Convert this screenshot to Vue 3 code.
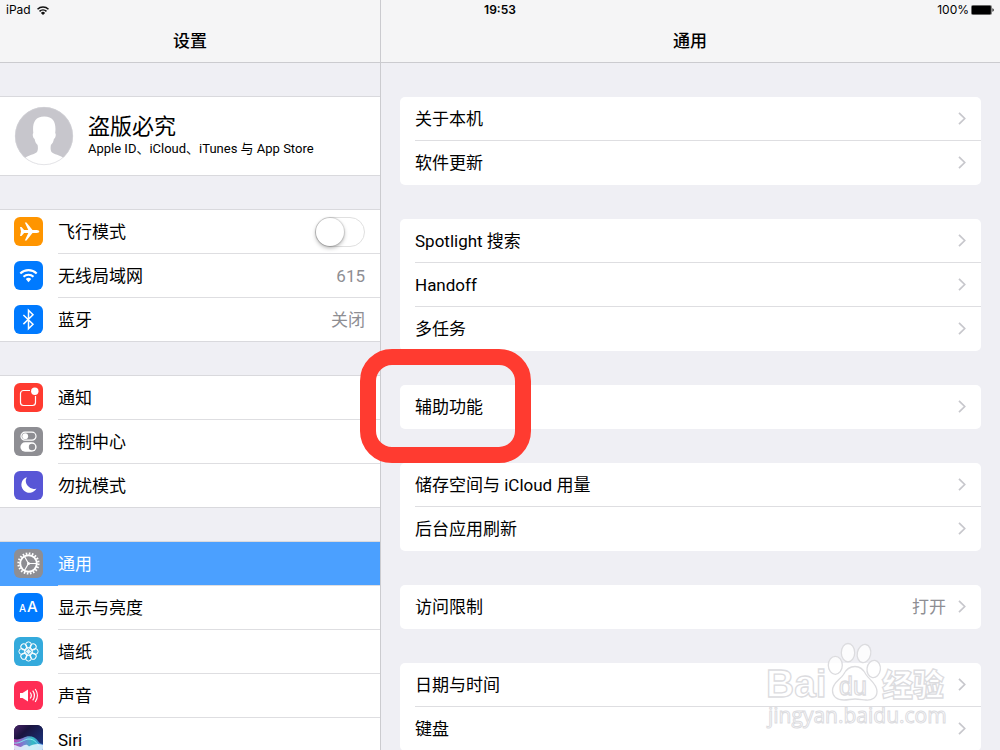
<template>
  <div class="screen">
    <header class="top">
      <div class="status">
        <span class="carrier">
          iPad
          <svg class="wifi" viewBox="0 0 12 9" aria-hidden="true">
            <path d="M.5 3.3a7.800 7.800 0 0 1 11 0M2.500 5.400a5 5 0 0 1 7 0" fill="none" stroke="#111" stroke-width="1.500" />
            <path d="M6 9 3.900 6.900a3 3 0 0 1 4.200 0z" fill="#111" />
          </svg>
        </span>
        <span class="clock">19:53</span>
        <span class="battery">
          100%
          <svg viewBox="0 0 23 10" aria-hidden="true">
            <rect x="0" y="0" width="21" height="10" rx="1.800" fill="#888" />
            <rect x=".8" y=".8" width="19" height="8.400" rx="1" fill="#000" />
            <path d="M21.500 3.200c1.600.4 1.600 3.200 0 3.600z" fill="#000" />
          </svg>
        </span>
      </div>
      <div class="titles">
        <h1>设置</h1>
        <h2>通用</h2>
      </div>
    </header>

    <div class="panes">
      <nav class="sidebar">
        <div class="block">
          <a class="profile" href="#account">
            <svg class="avatar" viewBox="0 0 60 60" aria-hidden="true">
              <circle cx="30" cy="30" r="29" fill="#c7c6cc" />
              <path d="M11 52c3-3 10-3.500 12-6 1.200-2 1-5 .6-7-1.600-1.500-2.600-3.500-3-6-1.800-1-2.400-5-1.300-6-1-9 1-16.500 11-16.500S42.300 18 41.200 27c1.100 1 .5 5-1.300 6-.4 2.500-1.400 4.500-3 6-.4 2-.6 5 .6 7 2 2.500 9 3 12 6a29 29 0 0 1-38.500 0z" fill="#fff" />
              <circle cx="30" cy="30" r="28.700" fill="none" stroke="#d2d1d6" stroke-width=".6" />
            </svg>
            <span class="who">
              <strong>盗版必究</strong>
              <small>Apple ID、iCloud、iTunes 与 App Store</small>
            </span>
          </a>
        </div>

        <div v-for="(block, b) in sidebar" :key="b" class="block">
          <component
            :is="item.toggle ? 'label' : 'a'"
            v-for="item in block"
            :key="item.id"
            class="item"
            :class="{ active: item.id === current }"
            :href="item.toggle ? undefined : '#' + item.id"
            @click="select(item)"
          >
            <svg class="icon" viewBox="0 0 29 29" aria-hidden="true">
              <rect width="29" height="29" rx="6" :fill="item.color" />

              <path
                v-if="item.id === 'airplane'"
                d="M6 10h1.500l2.600 3h4.200L10.800 5.500h1.700l6 7.500h4.300c1.600 0 2.500.8 2.500 1.500s-.9 1.500-2.500 1.500h-4.300l-6 7.500h-1.700l3.500-7.500h-4.200l-2.600 3H6l1-4.500z"
                fill="#fff"
              />

              <template v-else-if="item.id === 'wifi'">
                <path d="M6.300 12.400a12 12 0 0 1 16.400 0M9.500 15.700a7.400 7.400 0 0 1 10 0" fill="none" stroke="#fff" stroke-width="2.100" />
                <path d="m14.500 21.300-2.700-3.200a4 4 0 0 1 5.400 0z" fill="#fff" />
              </template>

              <path
                v-else-if="item.id === 'bluetooth'"
                d="m9.400 10 9.600 9.300-4.500 4.500V5.300L19 9.800l-9.600 9.300"
                fill="none"
                stroke="#fff"
                stroke-width="1.500"
              />

              <template v-else-if="item.id === 'notifications'">
                <path d="M16 7.500H9.500a3 3 0 0 0-3 3v9a3 3 0 0 0 3 3h9a3 3 0 0 0 3-3V13" fill="none" stroke="#fff" stroke-width="1.200" />
                <circle cx="20.800" cy="8.200" r="3.700" fill="#fff" />
              </template>

              <template v-else-if="item.id === 'control'">
                <rect x="7" y="5.200" width="15" height="8" rx="4" fill="none" stroke="#fff" stroke-width="1.200" />
                <circle cx="11.200" cy="9.200" r="2.900" fill="#fff" />
                <rect x="6.400" y="15.300" width="16.200" height="9.400" rx="4.700" fill="#fff" />
                <circle cx="18" cy="20" r="3.200" fill="#8e8e93" />
              </template>

              <path
                v-else-if="item.id === 'dnd'"
                d="M12.800 6.200a8 8 0 1 0 9.700 11.200A8 8 0 0 1 12.800 6.200z"
                fill="#fff"
              />

              <template v-else-if="item.id === 'general'">
                <circle cx="14.500" cy="14.500" r="10" fill="none" stroke="#fff" stroke-width="2.200" stroke-dasharray="1.600 1.542" />
                <circle cx="14.500" cy="14.500" r="8.300" fill="none" stroke="#fff" stroke-width="1.900" />
                <path d="M14.500 14.500h8M14.500 14.500l-4-7M14.500 14.500l-4 7" stroke="#fff" stroke-width="1.200" />
                <circle cx="14.500" cy="14.500" r="1.500" fill="#fff" />
              </template>

              <g v-else-if="item.id === 'display'" class="letters" fill="#fff">
                <text x="5" y="19" font-size="10">A</text>
                <text x="13" y="19" font-size="15">A</text>
              </g>

              <g v-else-if="item.id === 'wallpaper'" fill="none" stroke="#fff" stroke-width="1">
                <circle
                  v-for="n in 8"
                  :key="n"
                  cx="14.500"
                  cy="7.800"
                  r="2.900"
                  :transform="`rotate(${n * 45} 14.5 14.5)`"
                />
                <circle
                  v-for="n in 8"
                  :key="'i' + n"
                  cx="14.500"
                  cy="12.300"
                  r="1.700"
                  stroke-width=".6"
                  :transform="`rotate(${n * 45} 14.5 14.5)`"
                />
              </g>

              <template v-else-if="item.id === 'sound'">
                <path d="M6 12h2.500L14 8.500v12L8.500 17H6z" fill="#fff" />
                <path d="M16.200 11.500a5 5 0 0 1 0 6M18.700 9.700a8 8 0 0 1 0 9.600M21.200 8a11 11 0 0 1 0 13" fill="none" stroke="#fff" stroke-width="1.200" />
              </template>

              <template v-else-if="item.id === 'siri'">
                <defs>
                  <linearGradient id="siriSky" x1="0" y1="0" x2="1" y2="1">
                    <stop offset="0" stop-color="#4a2468" />
                    <stop offset=".3" stop-color="#1a1440" />
                    <stop offset="1" stop-color="#1b3f90" />
                  </linearGradient>
                  <linearGradient id="siriWave" x1="0" y1="0" x2="1" y2="0">
                    <stop offset="0" stop-color="#e04fd0" />
                    <stop offset=".35" stop-color="#8a9cf2" />
                    <stop offset=".65" stop-color="#3ce0dc" />
                    <stop offset="1" stop-color="#4a86f0" />
                  </linearGradient>
                </defs>
                <rect width="29" height="29" rx="6" fill="url(#siriSky)" />
                <path d="M0 14c4 1 6 0 9-1 5-3 12-2 15 3 1 2 3 3 5 3v4a6 6 0 0 1-6 6H6a6 6 0 0 1-6-6z" fill="url(#siriWave)" opacity=".8" />
                <path d="M0 18c6 1 10-4 15-4s8 4 10 7" fill="none" stroke="#7ff0f4" stroke-width=".9" />
                <path d="M0 20c3 0 5 3 8 1.500 2-1.500 5-3 7 0 3-2 9-3.500 14-1.500v3a6 6 0 0 1-6 6H6a6 6 0 0 1-6-6z" fill="#e8f8ff" opacity=".85" />
              </template>
            </svg>

            <span class="line">
              <span class="name">{{ item.name }}</span>
              <input v-if="item.toggle" v-model="airplane" type="checkbox" role="switch" class="switch" />
              <span v-if="item.value" class="value">{{ item.value }}</span>
            </span>
          </component>
        </div>
      </nav>

      <main class="detail">
        <section v-for="(card, c) in cards" :key="c" class="card">
          <a v-for="row in card" :key="row.name" class="row" href="#detail">
            <span class="name">{{ row.name }}</span>
            <span v-if="row.value" class="value">{{ row.value }}</span>
            <svg class="chevron" viewBox="0 0 8 13" aria-hidden="true">
              <path d="m1 .8 5.700 5.700L1 12.200" fill="none" stroke="#c7c7cc" stroke-width="1.700" />
            </svg>
            <span v-if="row.marked" class="ring"></span>
          </a>
        </section>
      </main>
    </div>

    <svg class="watermark" viewBox="0 0 190 90" aria-hidden="true">
      <g fill="#fff" fill-opacity=".8" stroke="#dcdcdf" stroke-width="1.300">
        <text class="latin" x="6" y="57" font-size="39">Bai</text>
        <ellipse cx="75.300" cy="25.300" rx="7" ry="9" />
        <ellipse cx="88" cy="12.700" rx="6.700" ry="9.200" />
        <ellipse cx="104" cy="13.500" rx="6.700" ry="9.200" transform="rotate(12 104 13.500)" />
        <ellipse cx="113.700" cy="29" rx="6.700" ry="8.700" transform="rotate(8 113.700 29)" />
        <path d="M95 26.500c6 0 9 4 11 8 3 5 11 9 11 17 0 6-5 9-11 8.500-4-.3-7-1-11-1s-7 1-11 1c-7 0-11.500-3.500-11.500-9.500 0-8 8-11 11-16 2-4 5.500-8 11.500-8z" />
        <text class="latin thin" x="79" y="55" font-size="25">du</text>
        <text class="han" x="122" y="56" font-size="31">经验</text>
        <text class="url" x="8" y="83" font-size="21">jingyan.baidu.com</text>
      </g>
    </svg>
  </div>
</template>

<script setup>
import { ref } from 'vue'

const current = ref('general')
const airplane = ref(false)

const sidebar = [
  [
    { id: 'airplane', name: '飞行模式', color: '#ff9500', toggle: true },
    { id: 'wifi', name: '无线局域网', color: '#007aff', value: '615' },
    { id: 'bluetooth', name: '蓝牙', color: '#007aff', value: '关闭' }
  ],
  [
    { id: 'notifications', name: '通知', color: '#ff3b30' },
    { id: 'control', name: '控制中心', color: '#8e8e93' },
    { id: 'dnd', name: '勿扰模式', color: '#5856d6' }
  ],
  [
    { id: 'general', name: '通用', color: '#8e8e93' },
    { id: 'display', name: '显示与亮度', color: '#007aff' },
    { id: 'wallpaper', name: '墙纸', color: '#34aadc' },
    { id: 'sound', name: '声音', color: '#ff2d55' },
    { id: 'siri', name: 'Siri', color: '#1a1440' }
  ]
]

const cards = [
  [{ name: '关于本机' }, { name: '软件更新' }],
  [{ name: 'Spotlight 搜索' }, { name: 'Handoff' }, { name: '多任务' }],
  [{ name: '辅助功能', marked: true }],
  [{ name: '储存空间与 iCloud 用量' }, { name: '后台应用刷新' }],
  [{ name: '访问限制', value: '打开' }],
  [{ name: '日期与时间' }, { name: '键盘' }]
]

function select(item) {
  if (!item.toggle) current.value = item.id
}
</script>

<style>
body {
  background: #efeff4;
}
</style>

<style scoped>
.screen {
  position: relative;
  display: flex;
  flex-direction: column;
  height: 100vh;
  overflow: hidden;
  background: #efeff4;
  color: #000;
  font-family: Roboto, "Noto Sans CJK SC", sans-serif;
  font-size: 17px;
  line-height: 22px;
}

.screen *,
.screen {
  box-sizing: border-box;
}

a {
  color: inherit;
  text-decoration: none;
}

/* Top bar */
.top {
  display: flex;
  flex-direction: column;
  flex: none;
  height: 63px;
  border-bottom: 1px solid #cbcbcf;
  background: linear-gradient(to right, #f5f5f6 38%, #cbcbcf 38%, #cbcbcf calc(38% + 1px), #f5f5f6 calc(38% + 1px));
}

.status {
  display: grid;
  grid-template-columns: 1fr auto 1fr;
  align-items: center;
  height: 20px;
  padding: 0 6px;
  font-family: Inter, sans-serif;
  font-size: 12px;
  line-height: 20px;
}

.carrier,
.battery {
  display: flex;
  align-items: center;
  gap: 6px;
}

.battery {
  justify-content: flex-end;
  gap: 2px;
}

.carrier svg {
  width: 12px;
  height: 9px;
}

.battery svg {
  width: 23px;
  height: 10px;
}

.clock {
  font-weight: 600;
}

.titles {
  display: grid;
  grid-template-columns: 38% 62%;
  text-align: center;
}

.titles h1,
.titles h2 {
  margin: 0;
  font-size: 17px;
  font-weight: 500;
  line-height: 42px;
}

.panes {
  display: grid;
  flex: 1;
  grid-template-columns: 38% 62%;
  min-height: 0;
}

/* Sidebar */
.sidebar {
  display: flex;
  flex-direction: column;
  gap: 33px;
  padding-top: 33px;
}

.block {
  border-top: 1px solid #d9d9dd;
  background: #fff;
}

.profile {
  display: flex;
  align-items: center;
  gap: 14px;
  height: 79px;
  padding-left: 14px;
  border-bottom: 1px solid #d9d9dd;
}

.avatar {
  width: 60px;
  height: 60px;
}

.who {
  display: flex;
  flex-direction: column;
}

.who strong {
  font-size: 22px;
  font-weight: 400;
  line-height: 26px;
}

.who small {
  font-size: 13px;
  line-height: 18px;
}

.item {
  display: flex;
  align-items: center;
  gap: 15px;
  height: 44px;
  padding-bottom: 2px;
  padding-left: 14px;
}

.item:last-child {
  padding-bottom: 1px;
  border-bottom: 1px solid #d9d9dd;
}

.item.active {
  background: #4ba0ff;
  color: #fff;
}

.icon {
  flex: none;
  width: 29px;
  height: 29px;
}

.letters {
  font-family: Inter, sans-serif;
  font-weight: 500;
}

.line {
  display: flex;
  flex: 1;
  align-items: center;
  justify-content: space-between;
  align-self: flex-start;
  height: 44px;
  padding-right: 15px;
  border-bottom: 1px solid #dedee1;
}

.item:last-child .line {
  border-bottom: 0;
}

.value {
  color: #8e8e93;
}

.switch {
  appearance: none;
  width: 50px;
  height: 30px;
  margin: 0;
  border: 1px solid #e0e0e0;
  border-radius: 15px;
  background: #fff;
}

.switch::before {
  content: "";
  display: block;
  width: 28px;
  height: 28px;
  border-radius: 50%;
  background: #fff;
  box-shadow: 0 0 1px 1px rgba(0, 0, 0, 0.12), 0 2px 4px rgba(0, 0, 0, 0.3);
}

.switch:checked {
  background: #4cd964;
}

.switch:checked::before {
  margin-left: 20px;
}

/* Detail pane */
.detail {
  display: flex;
  flex-direction: column;
  gap: 34px;
  padding: 34px 19px 0;
  border-left: 1px solid #cbcbcf;
}

.card {
  flex: none;
  border-radius: 5px;
  background: #fff;
}

.row {
  position: relative;
  display: flex;
  align-items: center;
  gap: 12px;
  height: 44px;
  margin-left: 15px;
  padding-right: 15px;
  border-bottom: 1px solid #dedee1;
}

.row:last-child {
  padding-bottom: 1px;
  border-bottom: 0;
}

.row .name {
  flex: 1;
}

.chevron {
  width: 8px;
  height: 13px;
}

/* Highlight drawn around one row's label */
.ring {
  position: absolute;
  z-index: 2;
  top: -36px;
  left: -55px;
  width: 171px;
  height: 114px;
  border: 16px solid #ff3b30;
  border-radius: 32px;
  pointer-events: none;
}

.watermark {
  position: absolute;
  right: 50px;
  bottom: 20px;
  width: 190px;
  height: 90px;
  pointer-events: none;
}

.latin {
  font-family: "Liberation Sans", sans-serif;
  font-weight: 700;
}

.thin {
  font-weight: 400;
}

.han {
  font-family: "Noto Sans CJK SC", sans-serif;
  font-weight: 900;
}

.url {
  font-family: "Open Sans", sans-serif;
  stroke-width: 1px;
}
</style>
